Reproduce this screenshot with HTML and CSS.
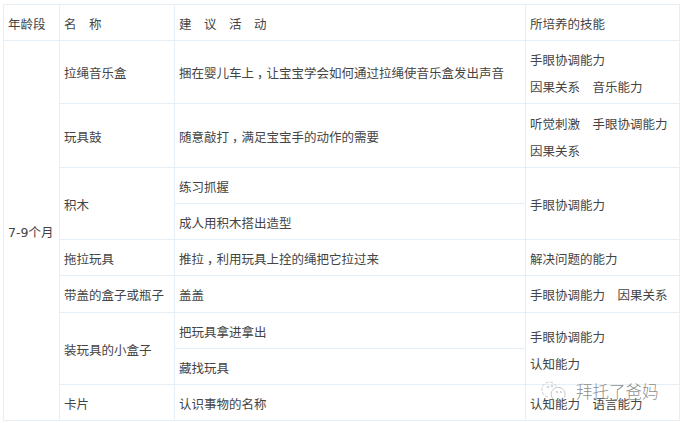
FILE: index.html
```html
<!DOCTYPE html>
<html lang="zh">
<head>
<meta charset="utf-8">
<title>7-9个月</title>
<link rel="stylesheet" href="styles.css">
</head>
<body>
<table class="chart">
<colgroup><col class="c1"><col class="c2"><col class="c3"><col class="c4"></colgroup>
<tr class="r36"><td>年龄段</td><td>名　称</td><td>建　议　活　动</td><td>所培养的技能</td></tr>
<tr class="r63"><td rowspan="9">7-9个月</td><td>拉绳音乐盒</td><td>捆在婴儿车上<span class="comma">，</span>让宝宝学会如何通过拉绳使音乐盒发出声音</td><td class="skills"><p>手眼协调能力</p><p>因果关系　音乐能力</p></td></tr>
<tr class="r64"><td>玩具鼓</td><td>随意敲打<span class="comma">，</span>满足宝宝手的动作的需要</td><td class="skills"><p>听觉刺激　手眼协调能力</p><p>因果关系</p></td></tr>
<tr class="r36"><td rowspan="2">积木</td><td>练习抓握</td><td rowspan="2">手眼协调能力</td></tr>
<tr class="r36"><td>成人用积木搭出造型</td></tr>
<tr class="r36"><td>拖拉玩具</td><td>推拉<span class="comma">，</span>利用玩具上拴的绳把它拉过来</td><td>解决问题的能力</td></tr>
<tr class="r37"><td>带盖的盒子或瓶子</td><td>盖盖</td><td>手眼协调能力　因果关系</td></tr>
<tr class="r36"><td rowspan="2">装玩具的小盒子</td><td>把玩具拿进拿出</td><td rowspan="2" class="skills"><p>手眼协调能力</p><p>认知能力</p></td></tr>
<tr class="r36"><td>藏找玩具</td></tr>
<tr class="r36"><td>卡片</td><td>认识事物的名称</td><td>认知能力　语言能力</td></tr>
</table>
<div class="mark">
<svg class="mark-icon" width="28" height="22" viewBox="0 0 28 22" fill="none" stroke="#c8c8c8" stroke-width="1"><path d="M7 17 A7.5 7.5 0 1 1 15 6" stroke-dasharray="3 1.5"/><path d="M12 19 A7 7 0 1 1 23 18" /><circle cx="7" cy="7" r=".8"/><circle cx="11" cy="6" r=".8"/><circle cx="16" cy="12" r=".7"/><circle cx="20" cy="12" r=".7"/></svg>
<span class="mark-text">拜托了爸妈</span>
</div>
</body>
</html>
```
FILE: styles.css
```css
html, body { margin: 0; padding: 0; background: #fff; }
body { width: 682px; height: 423px; overflow: hidden; position: relative; padding: 4px 0 0 3px; box-sizing: border-box; }
.chart {
  border-collapse: collapse;
  table-layout: fixed;
  width: 676px;
  font-family: "DejaVu Sans", "Noto Sans CJK SC", sans-serif;
  font-size: 12.5px;
  line-height: 18px;
  color: #444;
}
.chart td { border: 1.5px solid #e6eef6; padding: 4px 0 0 4px; vertical-align: middle; white-space: nowrap; }
.comma { font-feature-settings: "halt"; padding: 0 3.1px; }
.c1 { width: 56px; }
.c2 { width: 115px; }
.c3 { width: 351px; }
.c4 { width: 154px; }
.r36 { height: 36px; }
.r37 { height: 37px; }
.r63 { height: 63px; }
.r64 { height: 64px; }
.skills p { margin: 0; line-height: 27px; }
.mark { position: absolute; left: 541px; top: 379px; display: flex; align-items: center; gap: 7px; }
.mark-text { font-family: "Noto Sans CJK SC", sans-serif; font-size: 16.5px; font-weight: 300; color: rgba(110,110,110,.8); }
```
